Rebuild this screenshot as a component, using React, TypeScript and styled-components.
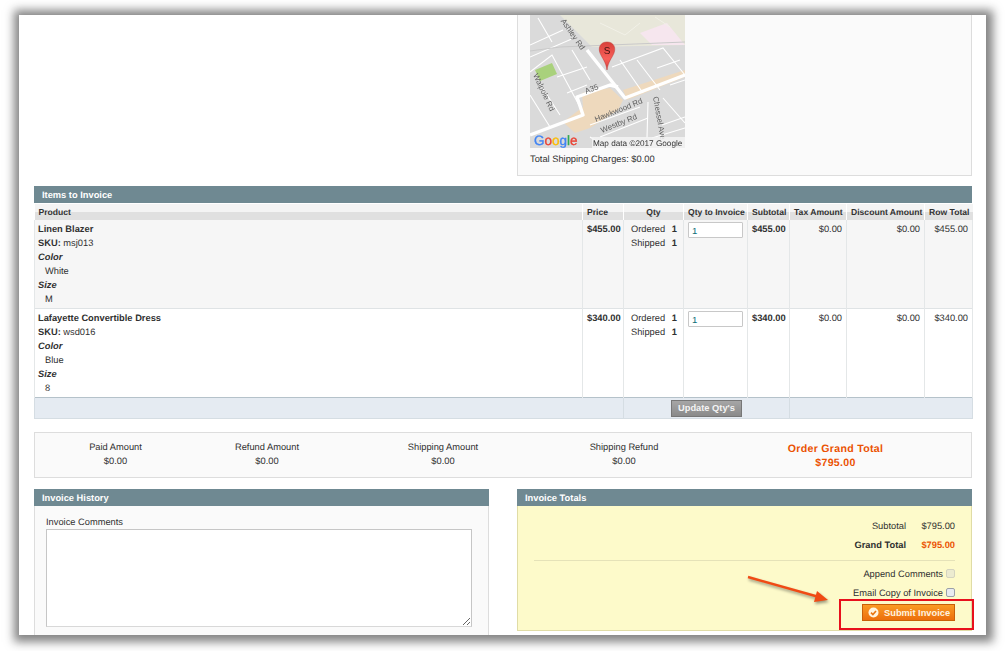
import React from "react";
import styled, { createGlobalStyle } from "styled-components";

const GlobalStyle = createGlobalStyle`
  html, body {
    margin: 0;
    padding: 0;
    background: #ffffff;
    overflow: hidden;
  }
  body {
    font-family: "Liberation Sans", Arial, sans-serif;
    font-size: 9.3px;
    color: #303030;
    text-rendering: geometricPrecision;
  }
`;

const Page = styled.div`
  width: 1005px;
  height: 651px;
  padding: 15px 19px 16px 19px;
  box-sizing: border-box;
`;

const Frame = styled.div`
  position: relative;
  width: 967px;
  height: 620px;
  padding: 0 14px 0 15px;
  box-sizing: border-box;
  background: #ffffff;
  overflow: hidden;
`;

const FrameShadow = styled.div`
  width: 967px;
  height: 620px;
  box-shadow: 1px 1px 9px 6px rgba(125, 125, 125, 0.95);
`;

const MapPanel = styled.section`
  width: 455px;
  height: 161px;
  margin-left: 483px;
  margin-bottom: 10px;
  padding-left: 12px;
  box-sizing: border-box;
  background: #fafafa;
  border: 1px solid #dddddd;
  border-top: none;
`;

const MapImage = styled.svg`
  display: block;
  width: 155px;
  height: 133px;
  filter: blur(0.35px);
`;

const ShippingLine = styled.div`
  margin-top: 5px;
  line-height: 12px;
`;

const PanelHeader = styled.h3`
  margin: 0;
  height: 17px;
  padding-left: 8px;
  box-sizing: border-box;
  background: #6f8992;
  color: #ffffff;
  font-size: 9.3px;
  font-weight: bold;
  line-height: 18px;
`;

const ItemsTable = styled.table`
  width: 938px;
  margin-top: 1px;
  table-layout: fixed;
  border-collapse: collapse;
`;

const HeadCell = styled.th<{ $align?: string }>`
  height: 16px;
  padding: 0 4px;
  background: linear-gradient(#f4f4f4 50%, #e0e0e0 50%);
  border-right: 1px solid #ffffff;
  color: #333333;
  font-size: 8.6px;
  font-weight: bold;
  text-align: ${(p) => p.$align || "center"};
  white-space: nowrap;
  &:last-child {
    border-right: none;
  }
`;

const ItemRow = styled.tr<{ $shade?: boolean }>`
  background: ${(p) => (p.$shade ? "#f6f6f6" : "#ffffff")};
  border-bottom: 1px solid #dfe3e5;
`;

const Cell = styled.td<{ $align?: string; $bold?: boolean }>`
  height: 88px;
  padding: 2px 4px 2px 4px;
  box-sizing: border-box;
  vertical-align: top;
  line-height: 14px;
  border-right: 1px solid #e4e7e8;
  text-align: ${(p) => p.$align || "left"};
  font-weight: ${(p) => (p.$bold ? "bold" : "normal")};
  &:first-child {
    padding-left: 3px;
    border-left: 1px solid #e4e7e8;
  }
`;

const ProductName = styled.div`
  font-weight: bold;
`;

const OptionLabel = styled.div`
  font-weight: bold;
  font-style: italic;
`;

const OptionValue = styled.div`
  padding-left: 7px;
`;

const QtyLine = styled.div`
  display: flex;
  justify-content: space-between;
  padding: 0 2px 0 3px;
  b {
    font-weight: bold;
  }
`;

const QtyInput = styled.input`
  display: block;
  width: 55px;
  height: 16px;
  margin: 0;
  padding: 0 3px;
  box-sizing: border-box;
  border: 1px solid #c8c8c8;
  border-radius: 1px;
  background: #ffffff;
  color: #0e6f78;
  font-family: inherit;
  font-size: 9.6px;
`;

const FootRow = styled.tr`
  background: #e5ebf2;
`;

const FootCell = styled.td`
  height: 20px;
  padding: 0;
  text-align: center;
  border-top: 1px solid #b5c2ca;
  border-bottom: 1px solid #d5dde3;
  border-right: 1px solid #d5dde3;
  &:first-child {
    border-left: 1px solid #d5dde3;
  }
`;

const UpdateButton = styled.button`
  display: inline-block;
  width: 71px;
  height: 17px;
  margin: 0;
  padding: 0;
  vertical-align: middle;
  border: 1px solid #777777;
  background: linear-gradient(#a6a6a6, #8a8a8a);
  color: #f4f4f4;
  font-family: inherit;
  font-size: 9.3px;
  font-weight: bold;
`;

const SummaryBar = styled.section`
  display: grid;
  grid-template-columns: 161px 142px 210px 152px 1fr;
  height: 46px;
  margin: 13px 0 11px;
  padding-top: 7px;
  box-sizing: border-box;
  background: #fafafa;
  border: 1px solid #dddddd;
`;

const SummaryItem = styled.div<{ $grand?: boolean }>`
  margin-top: ${(p) => (p.$grand ? "2px" : "0")};
  text-align: center;
  line-height: 14px;
  color: ${(p) => (p.$grand ? "#eb5202" : "#303030")};
  font-size: ${(p) => (p.$grand ? "10.6px" : "9.3px")};
  font-weight: ${(p) => (p.$grand ? "bold" : "normal")};
  letter-spacing: ${(p) => (p.$grand ? "0.3px" : "0")};
`;

const BottomRow = styled.div`
  display: grid;
  grid-template-columns: 455px 455px;
  justify-content: space-between;
  align-items: start;
`;

const HistoryBody = styled.div`
  height: 140px;
  padding: 10px 16px 0 11px;
  box-sizing: border-box;
  background: #fafafa;
  border: 1px solid #dddddd;
  border-top: none;
`;

const CommentLabel = styled.label`
  display: block;
  line-height: 12px;
  margin-bottom: 1px;
`;

const CommentBox = styled.textarea`
  display: block;
  width: 426px;
  height: 98px;
  margin: 0;
  padding: 2px;
  box-sizing: border-box;
  background: #ffffff;
  border: 1px solid #c6c6c6;
  border-bottom-color: #d8d8d8;
  outline: none;
`;

const TotalsBody = styled.div`
  height: 125px;
  padding: 13px 16px 0;
  box-sizing: border-box;
  background: #fdfaca;
  border: 1px solid #e0dca6;
  border-top: none;
`;

const TotalLine = styled.div<{ $bold?: boolean }>`
  display: grid;
  grid-template-columns: 1fr 49px;
  height: 19px;
  line-height: 14px;
  text-align: right;
  font-weight: ${(p) => (p.$bold ? "bold" : "normal")};
`;

const GrandValue = styled.span`
  color: #eb5202;
`;

const Divider = styled.hr`
  height: 1px;
  margin: 3px 0 3px;
  border: none;
  background: #e5e2b8;
`;

const OptionLine = styled.label`
  display: flex;
  justify-content: flex-end;
  align-items: center;
  gap: 3px;
  height: 19px;
  line-height: 14px;
`;

const Check = styled.input<{ $faded?: boolean }>`
  appearance: none;
  width: 9px;
  height: 9px;
  margin: 0;
  border: 1px solid ${(p) => (p.$faded ? "#d4d4c0" : "#9aa0a8")};
  border-radius: 2px;
  background: ${(p) => (p.$faded ? "#ecebd0" : "#e8ebf0")};
`;

const SubmitRow = styled.div`
  display: flex;
  justify-content: flex-end;
  margin-top: 2px;
`;

const SubmitButton = styled.button`
  display: flex;
  align-items: center;
  gap: 5px;
  width: 93px;
  height: 17px;
  margin: 0;
  padding: 0 0 0 5px;
  box-sizing: border-box;
  border: 1px solid #c95f08;
  background: linear-gradient(#fa9a24, #ec6f0c);
  color: #fff4e0;
  font-family: inherit;
  font-size: 9.3px;
  font-weight: bold;
`;

const CalloutBox = styled.div`
  position: absolute;
  left: 820px;
  top: 584px;
  width: 135px;
  height: 31px;
  box-sizing: border-box;
  border: 2px solid #e8101c;
`;

const CalloutArrow = styled.svg`
  position: absolute;
  left: 724px;
  top: 558px;
  width: 90px;
  height: 34px;
  overflow: visible;
  filter: drop-shadow(1px 2px 1.5px rgba(0, 0, 0, 0.4));
`;

const MapDrawing = () => (
  <MapImage viewBox="0 0 155 133">
    <defs>
      <linearGradient id="pin-fill" x1="0" y1="0" x2="0" y2="1">
        <stop offset="0" stopColor="#d8403a" />
        <stop offset="0.6" stopColor="#f8605a" />
        <stop offset="1" stopColor="#d8403a" />
      </linearGradient>
    </defs>
    <rect width="155" height="133" fill="#dadada" />
    <polygon points="30,0 155,0 155,30 62,32" fill="#e8e7da" />
    <polygon points="110,18 137,8 155,30 122,30" fill="#f6e6ee" />
    <polygon points="5,55 22,48 27,59 10,66" fill="#a9d17c" />
    <polygon points="33,107 53,92 52,78 80,73 93,85 88,95 60,113 45,118" fill="#eed9bd" />
    <polygon points="93,75 155,55 155,62 97,85" fill="#eed9bd" />
    <g stroke="#ffffff" strokeWidth="1.1" fill="none">
      <path d="M0 30 L33 15 M0 42 L44 23 M8 3 L22 27 M0 57 L22 40 L50 92" />
      <path d="M27 62 L57 52 M37 78 L57 70 M8 66 L30 100 M0 80 L20 112 M42 35 L60 65" />
      <path d="M82 52 L133 33 L155 60 M107 45 L130 75 M90 45 L113 78 M150 45 L127 53" />
      <path d="M133 83 L155 108 M118 87 L117 123 M132 110 L155 102 M122 123 L155 113" />
      <path d="M60 110 L110 92 M70 122 L118 103 M60 122 L78 133 M140 70 L155 65" />
    </g>
    <path d="M70 8 L95 20 L110 8 M125 2 L140 12" stroke="#f2f1e8" strokeWidth="1" fill="none" />
    <g stroke="#ffffff" fill="none" strokeLinejoin="round">
      <path d="M57 35 L95 83 L155 60" strokeWidth="3.4" />
      <path d="M0 120 L53 100 L47 82 L80 70 L88 72" strokeWidth="3.4" />
    </g>
    <path d="M0 36 L30 32 L155 27" stroke="#c9c9c9" strokeWidth="1" fill="none" />
    <g fontFamily="'Liberation Sans', sans-serif" fontSize="7.9" fill="#5f5f5f">
      <text transform="translate(30.5 6) rotate(55)">Ashley Rd</text>
      <text transform="translate(3 60) rotate(65)">Walpole Rd</text>
      <text transform="translate(56 79) rotate(-22)">A35</text>
      <text transform="translate(66 107) rotate(-22)">Hawkwood Rd</text>
      <text transform="translate(72 118) rotate(-22)">Westby Rd</text>
      <text transform="translate(123 82) rotate(80)">Chessel Ave</text>
    </g>
    <path
      d="M77 27 C70 27 68 33 70 38 C72 43 76 47 77 55 C78 47 82 43 84 38 C86 33 84 27 77 27 Z"
      fill="url(#pin-fill)"
      stroke="#b83a36"
      strokeWidth="0.5"
    />
    <text x="77" y="38.5" textAnchor="middle" fontFamily="'Liberation Sans', sans-serif" fontSize="10" fill="#3a100e">
      S
    </text>
    <rect x="62" y="122" width="93" height="11" fill="#f3f3f3" opacity="0.85" />
    <text x="63" y="130.5" fontFamily="'Liberation Sans', sans-serif" fontSize="8.2" fill="#333333">
      Map data ©2017 Google
    </text>
    <text x="4" y="129.5" fontFamily="'Liberation Sans', sans-serif" fontSize="13.5" strokeWidth="0.35">
      <tspan fill="#4285f4" stroke="#4285f4">G</tspan>
      <tspan fill="#ea4335" stroke="#ea4335">o</tspan>
      <tspan fill="#fbbc05" stroke="#fbbc05">o</tspan>
      <tspan fill="#4285f4" stroke="#4285f4">g</tspan>
      <tspan fill="#34a853" stroke="#34a853">l</tspan>
      <tspan fill="#ea4335" stroke="#ea4335">e</tspan>
    </text>
  </MapImage>
);

const items = [
  { name: "Linen Blazer", sku: "msj013", color: "White", size: "M", price: "$455.00", shade: true },
  { name: "Lafayette Convertible Dress", sku: "wsd016", color: "Blue", size: "8", price: "$340.00", shade: false },
];

const summary = [
  { label: "Paid Amount", value: "$0.00" },
  { label: "Refund Amount", value: "$0.00" },
  { label: "Shipping Amount", value: "$0.00" },
  { label: "Shipping Refund", value: "$0.00" },
];

const App = () => {
  return (
    <Page>
      <GlobalStyle />
      <FrameShadow>
        <Frame>
          <MapPanel>
            <MapDrawing />
            <ShippingLine>Total Shipping Charges: $0.00</ShippingLine>
          </MapPanel>

          <PanelHeader>Items to Invoice</PanelHeader>
          <ItemsTable>
            <colgroup>
              <col style={{ width: 548 }} />
              <col style={{ width: 41 }} />
              <col style={{ width: 60 }} />
              <col style={{ width: 64 }} />
              <col style={{ width: 42 }} />
              <col style={{ width: 57 }} />
              <col style={{ width: 78 }} />
              <col style={{ width: 48 }} />
            </colgroup>
            <thead>
              <tr>
                <HeadCell $align="left">Product</HeadCell>
                <HeadCell $align="left">Price</HeadCell>
                <HeadCell>Qty</HeadCell>
                <HeadCell>Qty to Invoice</HeadCell>
                <HeadCell>Subtotal</HeadCell>
                <HeadCell>Tax Amount</HeadCell>
                <HeadCell>Discount Amount</HeadCell>
                <HeadCell>Row Total</HeadCell>
              </tr>
            </thead>
            <tbody>
              {items.map((item) => (
                <ItemRow key={item.sku} $shade={item.shade}>
                  <Cell>
                    <ProductName>{item.name}</ProductName>
                    <div>
                      <b>SKU:</b> {item.sku}
                    </div>
                    <OptionLabel>Color</OptionLabel>
                    <OptionValue>{item.color}</OptionValue>
                    <OptionLabel>Size</OptionLabel>
                    <OptionValue>{item.size}</OptionValue>
                  </Cell>
                  <Cell $align="right" $bold>
                    {item.price}
                  </Cell>
                  <Cell>
                    <QtyLine>
                      <span>Ordered</span>
                      <b>1</b>
                    </QtyLine>
                    <QtyLine>
                      <span>Shipped</span>
                      <b>1</b>
                    </QtyLine>
                  </Cell>
                  <Cell>
                    <QtyInput defaultValue="1" />
                  </Cell>
                  <Cell $align="right" $bold>
                    {item.price}
                  </Cell>
                  <Cell $align="right">$0.00</Cell>
                  <Cell $align="right">$0.00</Cell>
                  <Cell $align="right">{item.price}</Cell>
                </ItemRow>
              ))}
              <FootRow>
                <FootCell colSpan={2} />
                <FootCell colSpan={3}>
                  <UpdateButton>Update Qty's</UpdateButton>
                </FootCell>
                <FootCell colSpan={3} />
              </FootRow>
            </tbody>
          </ItemsTable>

          <SummaryBar>
            {summary.map((entry) => (
              <SummaryItem key={entry.label}>
                <div>{entry.label}</div>
                <div>{entry.value}</div>
              </SummaryItem>
            ))}
            <SummaryItem $grand>
              <div>Order Grand Total</div>
              <div>$795.00</div>
            </SummaryItem>
          </SummaryBar>

          <BottomRow>
            <section>
              <PanelHeader>Invoice History</PanelHeader>
              <HistoryBody>
                <CommentLabel htmlFor="invoice-comments">Invoice Comments</CommentLabel>
                <CommentBox id="invoice-comments" />
              </HistoryBody>
            </section>
            <section>
              <PanelHeader>Invoice Totals</PanelHeader>
              <TotalsBody>
                <TotalLine>
                  <span>Subtotal</span>
                  <span>$795.00</span>
                </TotalLine>
                <TotalLine $bold>
                  <span>Grand Total</span>
                  <GrandValue>$795.00</GrandValue>
                </TotalLine>
                <Divider />
                <OptionLine>
                  Append Comments
                  <Check type="checkbox" $faded />
                </OptionLine>
                <OptionLine>
                  Email Copy of Invoice
                  <Check type="checkbox" />
                </OptionLine>
                <SubmitRow>
                  <SubmitButton>
                    <svg width="11" height="11" viewBox="0 0 11 11">
                      <circle cx="5.5" cy="5.5" r="5" fill="#fff4e0" />
                      <path d="M3 5.6 L4.9 7.5 L8 3.9" stroke="#e8750f" strokeWidth="1.6" fill="none" />
                    </svg>
                    Submit Invoice
                  </SubmitButton>
                </SubmitRow>
              </TotalsBody>
            </section>
          </BottomRow>

          <CalloutArrow viewBox="0 0 90 34">
            <path d="M5 4 L76 24" stroke="#f04a14" strokeWidth="2.4" fill="none" />
            <polygon points="74,18 85,27 71,29" fill="#f04a14" />
          </CalloutArrow>
          <CalloutBox />
        </Frame>
      </FrameShadow>
    </Page>
  );
};

export default App;
